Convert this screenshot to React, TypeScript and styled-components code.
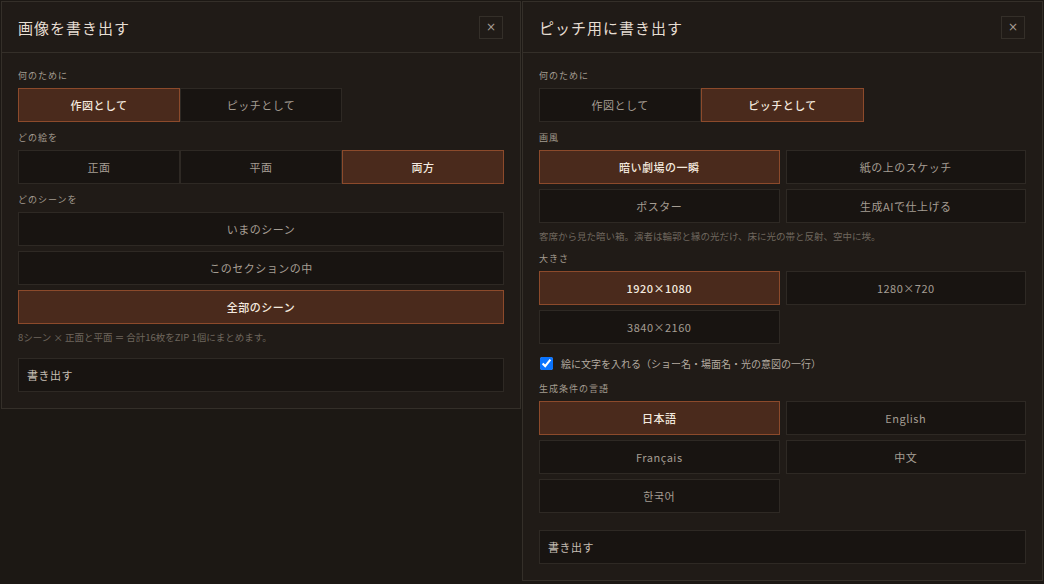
import React, { useState } from 'react'
import styled, { createGlobalStyle } from 'styled-components'

const GlobalStyle = createGlobalStyle`
  html, body {
    margin: 0;
    padding: 0;
    background: #1c1814;
    font-family: "Noto Sans CJK JP", "Noto Sans", sans-serif;
  }
  * {
    box-sizing: border-box;
  }
`

const Page = styled.div`
  display: flex;
  align-items: flex-start;
  gap: 1px;
  padding: 1px;
  width: 1044px;
  height: 584px;
  overflow: hidden;
`

const Panel = styled.div<{ width: number }>`
  width: ${({ width }) => width}px;
  background: #201b17;
  border: 1px solid #342f29;
  display: flex;
  flex-direction: column;
`

const Header = styled.div`
  height: 51px;
  display: flex;
  align-items: center;
  justify-content: space-between;
  padding: 0 17px 0 16px;
  border-bottom: 1px solid #342f29;
`

const Title = styled.h2`
  margin: 0;
  font-size: 15px;
  font-weight: 400;
  letter-spacing: 1px;
  color: #e6ded3;
`

const CloseButton = styled.button`
  width: 24px;
  height: 23px;
  border: 1px solid #342f29;
  background: transparent;
  color: #a59d93;
  font-size: 12px;
  line-height: 1;
  padding: 0;
  font-family: "DejaVu Sans", sans-serif;
  cursor: pointer;
`

const Body = styled.div`
  display: flex;
  flex-direction: column;
  gap: 9px;
  padding: 16px 16px 16px;
`

const Section = styled.div`
  display: flex;
  flex-direction: column;
  gap: 5px;
`

const Label = styled.div`
  font-size: 9px;
  line-height: 14px;
  letter-spacing: 1px;
  color: #a39b90;
`

const Grid = styled.div<{ cols: number; gapX: number }>`
  display: grid;
  grid-template-columns: repeat(${({ cols }) => cols}, 1fr);
  column-gap: ${({ gapX }) => gapX}px;
  row-gap: 5px;
`

const Option = styled.button<{ active?: boolean }>`
  height: 34px;
  border: 1px solid ${({ active }) => (active ? '#8c4a2b' : '#2e2924')};
  background: ${({ active }) => (active ? '#4a2a1c' : '#181411')};
  color: ${({ active }) => (active ? '#f3e9df' : '#a59d93')};
  font-family: "Noto Sans CJK JP", "Noto Sans CJK KR", "Noto Sans", sans-serif;
  font-size: 11px;
  font-weight: ${({ active }) => (active ? 500 : 400)};
  letter-spacing: 0.5px;
  cursor: pointer;
  padding: 0;
`

const Note = styled.div`
  margin-top: 1px;
  font-size: 9.5px;
  line-height: 14px;
  color: #6f675e;
`

const ExportButton = styled.button<{ offset: number }>`
  margin-top: ${({ offset }) => offset}px;
  height: 34px;
  border: 1px solid #2e2924;
  background: #181411;
  color: #c6beb4;
  font-family: "Noto Sans CJK JP", "Noto Sans", sans-serif;
  font-size: 11px;
  letter-spacing: 0.5px;
  text-align: left;
  padding: 0 8px;
  cursor: pointer;
`

const CheckRow = styled.label`
  display: flex;
  align-items: center;
  gap: 8px;
  height: 20px;
  font-size: 10px;
  color: #b3aaa0;
`

const Check = styled.input`
  width: 13px;
  height: 13px;
  margin: 0 0 0 1px;
  accent-color: #0a74ff;
`

type OptionGroupProps = {
    label: string
    items: string[]
    cols: number
    gapX: number
    selected: number
    onSelect: (i: number) => void
}

const OptionGroup = (props: OptionGroupProps) => {
    const { label, items, cols, gapX, selected, onSelect } = props
    return (
        <Section>
            <Label>{label}</Label>
            <Grid cols={cols} gapX={gapX}>
                {items.map((item, i) => (
                    <Option key={item} active={i === selected} onClick={() => onSelect(i)}>
                        {item}
                    </Option>
                ))}
            </Grid>
        </Section>
    )
}

const DrawingPanel = () => {
    const [purpose, setPurpose] = useState(0)
    const [view, setView] = useState(2)
    const [scene, setScene] = useState(2)

    return (
        <Panel width={520}>
            <Header>
                <Title>画像を書き出す</Title>
                <CloseButton>×</CloseButton>
            </Header>
            <Body>
                <OptionGroup label='何のために' items={['作図として', 'ピッチとして']} cols={3} gapX={0}
                    selected={purpose} onSelect={setPurpose} />
                <OptionGroup label='どの絵を' items={['正面', '平面', '両方']} cols={3} gapX={0}
                    selected={view} onSelect={setView} />
                <Section>
                    <Label>どのシーンを</Label>
                    <Grid cols={1} gapX={0}>
                        {['いまのシーン', 'このセクションの中', '全部のシーン'].map((s, i) => (
                            <Option key={s} active={i === scene} onClick={() => setScene(i)}>{s}</Option>
                        ))}
                    </Grid>
                    <Note>8シーン × 正面と平面 ＝ 合計16枚をZIP 1個にまとめます。</Note>
                </Section>
                <ExportButton offset={5}>書き出す</ExportButton>
            </Body>
        </Panel>
    )
}

const PitchPanel = () => {
    const [purpose, setPurpose] = useState(1)
    const [style, setStyle] = useState(0)
    const [size, setSize] = useState(0)
    const [lang, setLang] = useState(0)

    return (
        <Panel width={521}>
            <Header>
                <Title>ピッチ用に書き出す</Title>
                <CloseButton>×</CloseButton>
            </Header>
            <Body>
                <OptionGroup label='何のために' items={['作図として', 'ピッチとして']} cols={3} gapX={0}
                    selected={purpose} onSelect={setPurpose} />
                <Section>
                    <Label>画風</Label>
                    <Grid cols={2} gapX={6}>
                        {['暗い劇場の一瞬', '紙の上のスケッチ', 'ポスター', '生成AIで仕上げる'].map((s, i) => (
                            <Option key={s} active={i === style} onClick={() => setStyle(i)}>{s}</Option>
                        ))}
                    </Grid>
                    <Note>客席から見た暗い箱。演者は輪郭と縁の光だけ、床に光の帯と反射、空中に埃。</Note>
                </Section>
                <OptionGroup label='大きさ' items={['1920×1080', '1280×720', '3840×2160']} cols={2} gapX={6}
                    selected={size} onSelect={setSize} />
                <CheckRow>
                    <Check type='checkbox' defaultChecked />
                    絵に文字を入れる（ショー名・場面名・光の意図の一行）
                </CheckRow>
                <OptionGroup label='生成条件の言語' items={['日本語', 'English', 'Français', '中文', '한국어']}
                    cols={2} gapX={6} selected={lang} onSelect={setLang} />
                <ExportButton offset={8}>書き出す</ExportButton>
            </Body>
        </Panel>
    )
}

const App = () => {
    return (
        <>
            <GlobalStyle />
            <Page>
                <DrawingPanel />
                <PitchPanel />
            </Page>
        </>
    )
}

export default App
